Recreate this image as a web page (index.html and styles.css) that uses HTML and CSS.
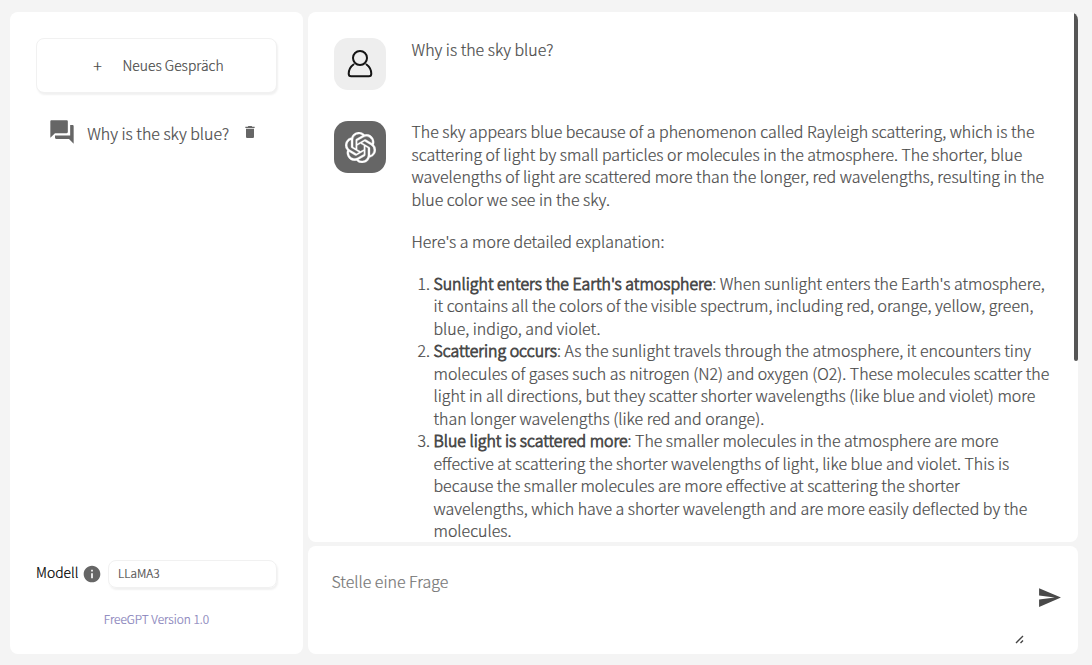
FILE: index.html
```html
<!DOCTYPE html>
<html lang="de">
<head>
<meta charset="utf-8">
<title>FreeGPT</title>
<link rel="stylesheet" href="styles.css">
</head>
<body>
<div class="app">
  <aside class="sidebar">
    <button class="new-chat"><span class="plus">+</span><span>Neues Gespräch</span></button>
    <div class="conversation">
      <svg class="chat-icon" viewBox="0 0 24 24"><path d="M21 6h-2v9H6v2c0 .55.45 1 1 1h11l4 4V7c0-.55-.45-1-1-1zm-4 6V3c0-.55-.45-1-1-1H3c-.55 0-1 .45-1 1v14l4-4h10c.55 0 1-.45 1-1z"/></svg>
      <span class="conversation-title">Why is the sky blue?</span>
      <svg class="trash-icon" viewBox="0 0 24 24"><path d="M6 19c0 1.100.9 2 2 2h8c1.100 0 2-.9 2-2V7H6v12zM19 4h-3.500l-1-1h-5l-1 1H5v2h14V4z"/></svg>
    </div>
    <div class="model">
      <span class="model-label">Modell</span>
      <svg class="info-icon" viewBox="0 0 24 24"><path d="M12 2C6.480 2 2 6.480 2 12s4.480 10 10 10 10-4.480 10-10S17.520 2 12 2zm1 15h-2v-6h2v6zm0-8h-2V7h2v2z"/></svg>
      <div class="select">LLaMA3</div>
    </div>
    <a class="version">FreeGPT Version 1.0</a>
  </aside>
  <main class="main">
    <section class="messages">
      <div class="message question">
        <div class="avatar user"><svg viewBox="0 0 52 52"><circle cx="26" cy="20" r="7" /><path d="M19.500 26.500C16 29 14.700 32 14.700 35.800Q14.700 38.300 17.200 38.300H34.800Q37.300 38.300 37.300 35.800C37.300 32 36 29 32.500 26.500"/></svg></div>
        <div class="text">Why is the sky blue?</div>
      </div>
      <div class="message answer">
        <div class="avatar bot"><svg viewBox="0 0 24 24"><path d="M22.282 9.821a5.985 5.985 0 0 0-.516-4.910 6.046 6.046 0 0 0-6.510-2.900A6.065 6.065 0 0 0 4.981 4.180a5.985 5.985 0 0 0-3.998 2.900 6.046 6.046 0 0 0 .743 7.097 5.980 5.980 0 0 0 .510 4.911 6.051 6.051 0 0 0 6.515 2.900A5.985 5.985 0 0 0 13.260 24a6.056 6.056 0 0 0 5.772-4.206 5.990 5.990 0 0 0 3.998-2.900 6.056 6.056 0 0 0-.748-7.073zM13.260 22.430a4.476 4.476 0 0 1-2.876-1.040l.141-.081 4.779-2.758a.795.795 0 0 0 .392-.681v-6.737l2.020 1.168a.071.071 0 0 1 .038.052v5.583a4.504 4.504 0 0 1-4.494 4.494zM3.600 18.304a4.470 4.470 0 0 1-.535-3.014l.142.085 4.783 2.759a.771.771 0 0 0 .780 0l5.843-3.369v2.332a.080.080 0 0 1-.033.062L9.740 19.950a4.500 4.500 0 0 1-6.140-1.646zM2.340 7.896a4.485 4.485 0 0 1 2.366-1.973V11.600a.766.766 0 0 0 .388.676l5.815 3.355-2.020 1.168a.076.076 0 0 1-.071 0l-4.830-2.786A4.504 4.504 0 0 1 2.340 7.872zm16.597 3.855l-5.833-3.387L15.119 7.200a.076.076 0 0 1 .071 0l4.830 2.791a4.494 4.494 0 0 1-.676 8.105v-5.678a.790.790 0 0 0-.407-.667zm2.010-3.023l-.141-.085-4.774-2.782a.776.776 0 0 0-.785 0L9.409 9.230V6.897a.066.066 0 0 1 .028-.061l4.830-2.787a4.500 4.500 0 0 1 6.680 4.660zM8.307 12.863l-2.020-1.164a.080.080 0 0 1-.038-.057V6.075a4.500 4.500 0 0 1 7.375-3.453l-.142.080L8.704 5.460a.795.795 0 0 0-.393.681zm1.097-2.365l2.602-1.500 2.607 1.500v2.999l-2.597 1.500-2.607-1.500z"/></svg></div>
        <div class="text">
          <p>The sky appears blue because of a phenomenon called Rayleigh scattering, which is the<br>scattering of light by small particles or molecules in the atmosphere. The shorter, blue<br>wavelengths of light are scattered more than the longer, red wavelengths, resulting in the<br>blue color we see in the sky.</p>
          <p>Here's a more detailed explanation:</p>
          <ol>
            <li><b>Sunlight enters the Earth's atmosphere</b>: When sunlight enters the Earth's atmosphere,<br>it contains all the colors of the visible spectrum, including red, orange, yellow, green,<br>blue, indigo, and violet.</li>
            <li><b>Scattering occurs</b>: As the sunlight travels through the atmosphere, it encounters tiny<br>molecules of gases such as nitrogen (N2) and oxygen (O2). These molecules scatter the<br>light in all directions, but they scatter shorter wavelengths (like blue and violet) more<br>than longer wavelengths (like red and orange).</li>
            <li><b>Blue light is scattered more</b>: The smaller molecules in the atmosphere are more<br>effective at scattering the shorter wavelengths of light, like blue and violet. This is<br>because the smaller molecules are more effective at scattering the shorter<br>wavelengths, which have a shorter wavelength and are more easily deflected by the<br>molecules.</li>
          </ol>
        </div>
      </div>
      <div class="scrollbar"></div>
    </section>
    <section class="composer">
      <span class="placeholder">Stelle eine Frage</span>
      <svg class="grip" viewBox="0 0 10 10"><path d="M1 9L8 2M5.500 9L8 6.500"/></svg>
      <svg class="send" viewBox="0 0 24 24"><path d="M2.010 21L23 12 2.010 3 2 10l15 2-15 2z"/></svg>
    </section>
  </main>
</div>
</body>
</html>
```
FILE: styles.css
```css
* { box-sizing: border-box; }
body {
  margin: 0;
  background: #f4f4f4;
  color: #494949;
  font-family: "Noto Sans CJK SC", sans-serif;
  font-size: 15.93px;
  font-weight: 300;
  -webkit-text-stroke-width: 0.2px;
}
svg { display: block; flex: none; }
.app { display: flex; gap: 5px; width: 1092px; height: 665px; padding: 12px 14px 11px 10px; overflow: hidden; }
.sidebar { display: flex; flex-direction: column; width: 293px; padding: 26px 26px 25px; background: #fff; border-radius: 8px; }
.new-chat {
  display: flex; align-items: center; gap: 20px; height: 55px; padding: 0 0 2px 55.5px;
  background: #fff; border: 1px solid #f1f1f1; border-radius: 8px; box-shadow: 1px 2px 2px #f1f1f1;
  font: inherit; font-size: 13.9px; color: #494949;
}
.plus { width: 10px; font-size: 16px; }
.conversation { display: flex; align-items: center; height: 28px; margin-top: 26px; padding-left: 13px; }
.chat-icon { width: 28px; height: 28px; margin-top: -2px; margin-left: -.8px; fill: #666; }
.conversation-title { width: 144px; margin-left: 11px; white-space: nowrap; }
.trash-icon { width: 16px; height: 16px; margin: -3px 0 0 10.8px; fill: #666; }
.model { display: flex; align-items: center; height: 28px; margin-top: auto; }
.model-label { width: 46px; padding-bottom: 4px; font-size: 13.9px; color: #000; }
.info-icon { width: 20px; height: 20px; margin-top: -1px; fill: #666; }
.select {
  display: flex; align-items: center; flex: 1; height: 28px; margin-left: 6px; padding: 0 0 3px 9px;
  border: 1px solid #f1f1f1; border-radius: 8px; box-shadow: 1px 2px 2px #f1f1f1; font-size: 11.9px;
}
.version { margin: 22px 0 1px; line-height: 18px; text-align: center; font-size: 11.9px; color: #8883bb; }
.main { display: flex; flex-direction: column; gap: 4px; width: 770px; }
.messages { position: relative; height: 530px; padding: 26px 26px 0; background: #fff; border-radius: 8px; overflow: hidden; }
.message { display: flex; gap: 25.5px; line-height: 22.5px; }
.question { margin-bottom: 31px; }
.question .text { margin-top: .5px; }
.avatar { display: flex; align-items: center; justify-content: center; flex: none; width: 52px; height: 52px; border-radius: 14px; }
.user { background: #eee; }
.user svg { width: 52px; height: 52px; fill: none; stroke: #151515; stroke-width: 2; stroke-linecap: round; }
.bot { background: #666; }
.bot svg { width: 31px; height: 31px; fill: #fff; stroke: #fff; stroke-width: .25; }
.text { white-space: nowrap; }
.text p { margin: 0 0 19.5px; }
.text ol { margin: 0; padding-left: 22px; }
.answer .text { margin-top: 0; }
.text b { font-weight: inherit; -webkit-text-stroke-width: 0.8px; }
.scrollbar { position: absolute; top: 0; right: 0; width: 4px; height: 349px; border-radius: 2px; background: #555; }
.composer { display: flex; flex: 1; padding: 25px 16px 10px 23.5px; background: #fff; border-radius: 8px; }
.placeholder { flex: 1; line-height: 22px; color: #757575; }
.grip { align-self: flex-end; width: 10px; height: 10px; margin-right: 12px; fill: none; stroke: #444; stroke-width: 1.4; }
.send { width: 25px; height: 25px; margin-top: 14px; fill: #494949; }
```
